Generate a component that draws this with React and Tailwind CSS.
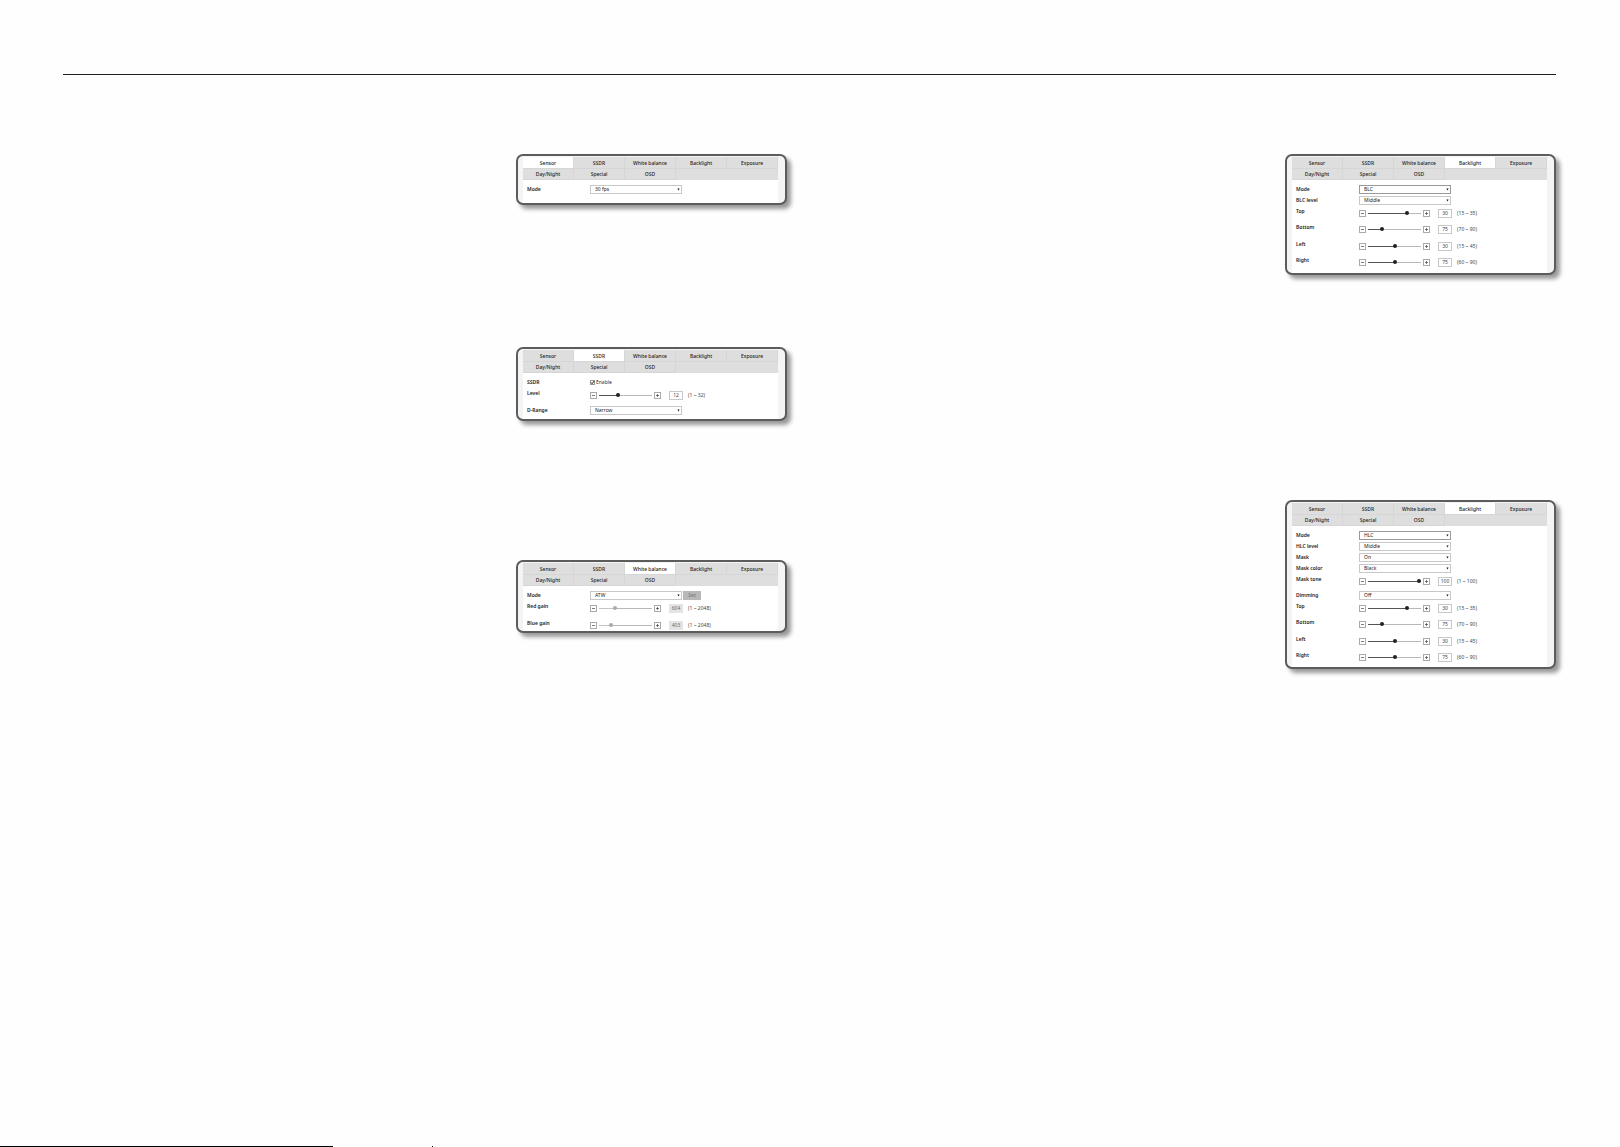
import React from 'react';

const tabs = ['Sensor', 'SSDR', 'White balance', 'Backlight', 'Exposure', 'Day/Night', 'Special', 'OSD'];

const Row = ({ label, id, tall, children }) => (
  <div className={`flex items-start ${tall ? 'h-[16px] even:h-[17px]' : 'h-[11px]'}`}>
    <label htmlFor={id} className="w-[63px] shrink-0 font-semibold leading-[9px] text-[#222]">
      {label}
    </label>
    {children}
  </div>
);

const SelectRow = ({ id, label, value, active, button }) => (
  <Row id={id} label={label}>
    <div className="relative">
      <select
        id={id}
        defaultValue={value}
        className={`block h-[9px] w-[92px] appearance-none border bg-white pl-[4px] leading-[7px] text-[#222] ${
          active ? 'border-[#999]' : 'border-[#c8c8c8]'
        }`}
      >
        <option>{value}</option>
      </select>
      <svg viewBox="0 0 3 3" className="pointer-events-none absolute right-[2px] top-[3px] size-[3px]">
        <path d="M0.4 0.5h2.2L1.5 2.6z" fill="#111" />
      </svg>
    </div>
    {button && (
      <button type="button" disabled className="ml-px h-[9px] w-[18px] bg-[#b8b8b8] leading-[9px] text-[#777]">
        {button}
      </button>
    )}
  </Row>
);

const Step = ({ name, plus }) => (
  <button type="button" aria-label={name} className="size-[7px] shrink-0 border border-[#aaa] bg-white">
    <svg viewBox="0 0 5 5" className="block size-[5px]">
      <path d={plus ? 'M1 2.5h3M2.5 1v3' : 'M1 2.5h3'} stroke="#444" strokeWidth="0.7" fill="none" />
    </svg>
  </button>
);

const SliderRow = ({ id, label, value, min, max, disabled }) => {
  const pct = ((value - min) / (max - min)) * 100;
  const fill = disabled ? '#c4c4c4' : '#555';
  return (
    <Row id={id} label={label} tall>
      <div className="flex h-[12px] items-center">
        <Step name={`${label} down`} />
        <input
          id={id}
          type="range"
          min={min}
          max={max}
          defaultValue={value}
          disabled={disabled}
          style={{ backgroundImage: `linear-gradient(to right, ${fill} ${pct}%, #b8b8b8 ${pct}%)` }}
          className="mx-[2px] h-[4px] w-[53px] appearance-none bg-size-[100%_1px] bg-center bg-no-repeat [&::-webkit-slider-thumb]:size-[4px] [&::-webkit-slider-thumb]:appearance-none [&::-webkit-slider-thumb]:rounded-full [&::-webkit-slider-thumb]:bg-[#222] disabled:[&::-webkit-slider-thumb]:bg-[#aaa]"
        />
        <Step name={`${label} up`} plus />
        <input
          type="text"
          aria-label={`${label} value`}
          defaultValue={value}
          disabled={disabled}
          className="ml-[8px] h-[9px] w-[14px] border border-[#c8c8c8] bg-white text-center leading-[7px] text-[#444] disabled:border-[#e4e4e4] disabled:bg-[#e4e4e4] disabled:text-[#666]"
        />
        <span className="ml-[5px] whitespace-nowrap text-[#444]">
          ({min} ~ {max})
        </span>
      </div>
    </Row>
  );
};

const Panel = ({ active, className, children }) => (
  <section
    className={`w-[271px] overflow-hidden rounded-[7px] border-2 border-[#5c5c5c] bg-[#f4f4f4] pl-[5px] pr-[7px] pt-px shadow-[4px_4px_4px_rgba(0,0,0,0.4)] ${className}`}
  >
    <nav className="grid h-[23px] grid-cols-5 grid-rows-2 bg-[#dedede]">
      {tabs.map((tab) => (
        <button
          key={tab}
          type="button"
          className={`border-b border-r border-[#d6d6d6] pt-px font-medium leading-[8px] text-[#222] ${
            tab === active ? 'bg-white' : ''
          }`}
        >
          {tab}
        </button>
      ))}
    </nav>
    <div className="h-full bg-white pl-[4px] pt-[5px]">{children}</div>
  </section>
);

const App = () => (
  <div className="bg-[#fefefe] font-['Noto_Sans',sans-serif] text-[5px] leading-[6px]">
    <main className="ml-[63px] mr-[64px] flex min-h-[calc(100vh-1px)] flex-col pt-[74px]">
      <hr className="border-t border-[#231f20]" />
      <div className="grid grid-cols-2 gap-x-[45px] pt-[79px]">
        <div className="flex flex-col items-end">
          <Panel active="Sensor" className="h-[51px]">
            <SelectRow id="sensor-mode" label="Mode" value="30 fps" />
          </Panel>
          <Panel active="SSDR" className="mt-[142px] h-[74px]">
            <Row id="ssdr" label="SSDR">
              <span className="relative mt-[2px] size-[5px]">
                <input
                  id="ssdr"
                  type="checkbox"
                  defaultChecked
                  className="block size-[5px] appearance-none border border-[#999] bg-white"
                />
                <svg viewBox="0 0 5 5" className="pointer-events-none absolute inset-0 size-[5px]">
                  <path d="M1 2.4l1.1 1.3L4.2 1" stroke="#222" strokeWidth="1" fill="none" />
                </svg>
              </span>
              <label htmlFor="ssdr" className="ml-px leading-[9px] text-[#333]">
                Enable
              </label>
            </Row>
            <SliderRow id="level" label="Level" value={12} min={1} max={32} />
            <SelectRow id="d-range" label="D-Range" value="Narrow" />
          </Panel>
          <Panel active="White balance" className="mt-[139px] h-[73px]">
            <SelectRow id="wb-mode" label="Mode" value="ATW" button="Set" />
            <SliderRow id="red" label="Red gain" value={604} min={1} max={2048} disabled />
            <SliderRow id="blue" label="Blue gain" value={403} min={1} max={2048} disabled />
          </Panel>
        </div>
        <div className="flex flex-col items-end">
          <Panel active="Backlight" className="h-[121px]">
            <SelectRow id="blc-mode" label="Mode" value="BLC" active />
            <SelectRow id="blc-level" label="BLC level" value="Middle" />
            <SliderRow id="blc-top" label="Top" value={30} min={15} max={35} />
            <SliderRow id="blc-bottom" label="Bottom" value={75} min={70} max={90} />
            <SliderRow id="blc-left" label="Left" value={30} min={15} max={45} />
            <SliderRow id="blc-right" label="Right" value={75} min={60} max={90} />
          </Panel>
          <Panel active="Backlight" className="mt-[225px] h-[169px]">
            <SelectRow id="hlc-mode" label="Mode" value="HLC" active />
            <SelectRow id="hlc-level" label="HLC level" value="Middle" />
            <SelectRow id="mask" label="Mask" value="On" />
            <SelectRow id="mask-color" label="Mask color" value="Black" />
            <SliderRow id="mask-tone" label="Mask tone" value={100} min={1} max={100} />
            <SelectRow id="dimming" label="Dimming" value="Off" />
            <SliderRow id="hlc-top" label="Top" value={30} min={15} max={35} />
            <SliderRow id="hlc-bottom" label="Bottom" value={75} min={70} max={90} />
            <SliderRow id="hlc-left" label="Left" value={30} min={15} max={45} />
            <SliderRow id="hlc-right" label="Right" value={75} min={60} max={90} />
          </Panel>
        </div>
      </div>
    </main>
    <footer className="flex h-px">
      <div className="w-[333px] bg-black" />
      <div className="ml-[99px] w-px bg-black" />
    </footer>
  </div>
);

export default App;
